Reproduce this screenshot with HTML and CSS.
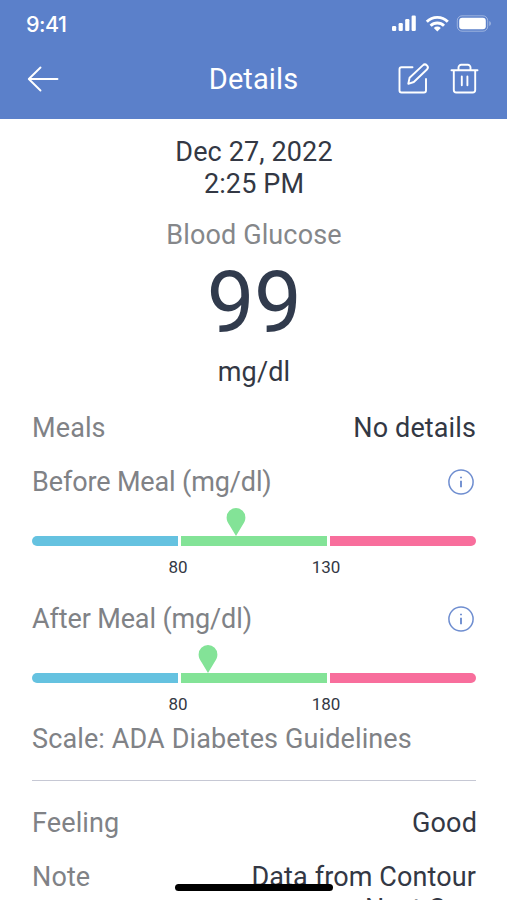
FILE: index.html
```html
<!DOCTYPE html>
<html lang="en">
<head>
<meta charset="utf-8">
<title>Details</title>
<link rel="stylesheet" href="styles.css">
</head>
<body>
<div class="screen">
  <header class="header">
    <div class="status">
      <span class="time">9:41</span>
      <svg class="status-icons" width="102" height="20" viewBox="0 0 102 20" fill="#fff">
        <rect x="1" y="12" width="4.200" height="5" rx="1.2"/>
        <rect x="7.600" y="9" width="4.200" height="8" rx="1.2"/>
        <rect x="14.200" y="5" width="4.200" height="12" rx="1.2"/>
        <rect x="20.600" y="1.500" width="4.200" height="15.500" rx="1.2"/>
        <g fill="none" stroke="#fff" stroke-width="2.9">
          <path d="M35.800 7.800a14.600 14.600 0 0 1 21 0"/>
          <path d="M39.600 11.800a9.500 9.500 0 0 1 13.400 0"/>
        </g>
        <path d="M42.800 14a5 5 0 0 1 7 0l-3.500 3.500z"/>
        <rect x="66.300" y="1.800" width="30.400" height="15.400" rx="4.800" fill="none" stroke="#fff" stroke-opacity=".4"/>
        <rect x="68.200" y="3.700" width="26.600" height="11.600" rx="3"/>
        <path d="M98.300 7c2 .8 2 4.200 0 5z" fill-opacity=".45"/>
      </svg>
    </div>
    <nav class="nav">
      <svg class="back" width="34" height="30" viewBox="0 0 34 30" fill="none" stroke="#fff" stroke-width="1.9" stroke-linecap="round" stroke-linejoin="round"><path d="M32.500 15H4M15.500 3.500 3.800 15l11.700 11.500"/></svg>
      <h1 class="title">Details</h1>
      <div class="actions">
        <svg width="34" height="34" viewBox="0 0 34 34" fill="none" stroke="#fff" stroke-width="1.9" stroke-linecap="round" stroke-linejoin="round"><path d="M15.500 5.300H4.500A2 2 0 0 0 2.500 7.300V28.500a2 2 0 0 0 2 2H27a2 2 0 0 0 2-2V17"/><path d="M11.300 21.800 12.600 15.800 25.800 3.400a2.900 2.900 0 0 1 4.100 0 2.900 2.900 0 0 1 0 4.100L16.800 20z"/></svg>
        <svg width="34" height="34" viewBox="0 0 34 34" fill="none" stroke="#fff" stroke-width="1.9" stroke-linecap="round" stroke-linejoin="round"><path d="M3.500 8.300h26M5.800 8.300V28a2.500 2.500 0 0 0 2.500 2.500h16.400a2.500 2.500 0 0 0 2.500-2.500V8.300M10.500 8.300V5.500a2.700 2.700 0 0 1 2.700-2.700h6.600a2.700 2.700 0 0 1 2.700 2.700v2.800M13.800 14.500v8.800M19.400 14.500v8.800"/></svg>
      </div>
    </nav>
  </header>

  <main class="content">
    <section class="reading">
      <p class="date">Dec 27, 2022<br>2:25 PM</p>
      <p class="kind">Blood Glucose</p>
      <p class="value">99</p>
      <p class="unit">mg/dl</p>
    </section>

    <div class="row meals"><span class="label">Meals</span><span>No details</span></div>

    <section class="range">
      <div class="row"><span class="label range-name">Before Meal (mg/dl)</span>
        <svg class="info" width="28" height="28" viewBox="0 0 28 28" fill="none" stroke="#6f8ed0" stroke-width="1.500"><circle cx="14" cy="14" r="12.100"/><path d="M14 12.800v6.500" stroke-width="1.900"/><path d="M14 8.700v1.600" stroke-width="1.900"/></svg>
      </div>
      <div class="scale">
        <i class="low"></i><i class="normal"></i><i class="high"></i>
        <svg class="pin before" width="20" height="28" viewBox="0 0 20 28" fill="#83e397"><path d="M10 0a9.400 9.400 0 0 0-9.400 9.400c0 3.300 1.300 5.200 3.100 8.200L10 28l6.300-10.400c1.800-3 3.100-4.900 3.100-8.200A9.400 9.400 0 0 0 10 0z"/></svg>
      </div>
      <div class="ticks"><span>80</span><span>130</span></div>
    </section>

    <section class="range">
      <div class="row"><span class="label range-name">After Meal (mg/dl)</span>
        <svg class="info" width="28" height="28" viewBox="0 0 28 28" fill="none" stroke="#6f8ed0" stroke-width="1.500"><circle cx="14" cy="14" r="12.100"/><path d="M14 12.800v6.500" stroke-width="1.900"/><path d="M14 8.700v1.600" stroke-width="1.900"/></svg>
      </div>
      <div class="scale">
        <i class="low"></i><i class="normal"></i><i class="high"></i>
        <svg class="pin after" width="20" height="28" viewBox="0 0 20 28" fill="#83e397"><path d="M10 0a9.400 9.400 0 0 0-9.400 9.400c0 3.300 1.300 5.200 3.100 8.200L10 28l6.300-10.400c1.800-3 3.100-4.900 3.100-8.200A9.400 9.400 0 0 0 10 0z"/></svg>
      </div>
      <div class="ticks"><span>80</span><span>180</span></div>
    </section>

    <p class="label guideline">Scale: ADA Diabetes Guidelines</p>
    <hr class="divider">
    <div class="row feeling"><span class="label">Feeling</span><span>Good</span></div>
    <div class="row note"><span class="label">Note</span><span class="note-text">Data from Contour<br>Next Gen</span></div>
  </main>
  <div class="home"></div>
</div>
</body>
</html>
```
FILE: styles.css
```css
* { box-sizing: border-box; margin: 0; padding: 0; }
html, body { height: 100%; overflow: hidden; background: #fff; }
body { font-family: Roboto, "Liberation Sans", sans-serif; color: #333844; }
.screen {
  position: relative;
  width: 507px;
  height: 900px;
  overflow: hidden;
  font-size: 27px;
  line-height: 32px;
  letter-spacing: .12px;
}
.header { height: 119px; background: #5b80ca; color: #fff; }
.status {
  height: 48px;
  padding: 0 14px 0 26px;
  display: flex;
  justify-content: space-between;
  align-items: center;
}
.time { font-family: Inter, sans-serif; font-size: 21.5px; font-weight: 500; letter-spacing: -.5px; }
.nav {
  height: 62px;
  padding: 0 25px;
  display: grid;
  grid-template-columns: 1fr auto 1fr;
  align-items: center;
}
.title { font-size: 29px; font-weight: 400; letter-spacing: .1px; }
.actions { display: flex; justify-content: flex-end; gap: 17px; }
.content { padding: 17px 31px 0 32px; }
.reading { text-align: center; }
.kind { margin-top: 19px; color: #85878a; }
.value { height: 104px; line-height: 104px; font-size: 85px; color: #313b4d; letter-spacing: -.5px; }
.unit { margin-top: 1px; }
.row { display: flex; justify-content: space-between; align-items: flex-start; }
.label { color: #808286; }
.range-name { letter-spacing: -.13px; }
.meals { margin-top: 24px; }
.range { margin-top: 22px; height: 115px; }
.info { margin: 2px 1px 0 0; }
.scale {
  position: relative;
  display: grid;
  grid-template-columns: 146px 146px 146px;
  gap: 3px;
  margin-top: 38px;
  height: 10px;
}
.low { background: #65c2e0; border-radius: 5px 0 0 5px; }
.normal { background: #83e397; }
.high { background: #f86e9c; border-radius: 0 5px 5px 0; }
.pin { position: absolute; top: -28px; }
.before { left: 194px; }
.after { left: 166px; }
.ticks {
  display: grid;
  grid-template-columns: 148px 148px;
  margin: 11px 0 0 72px;
  height: 20px;
  font-size: 17px;
  line-height: 20px;
  letter-spacing: -.1px;
  text-align: center;
}
.guideline { margin-top: 5px; }
.divider { border: 0; height: 1px; margin: 25px 0 0; background: #c6c8d4; }
.feeling { margin: 26px -1px 0 0; }
.note { margin-top: 22px; }
.note-text { text-align: right; }
.home {
  position: absolute;
  left: 175px;
  bottom: 9px;
  width: 158px;
  height: 7px;
  border-radius: 4px;
  background: #000;
}
```
